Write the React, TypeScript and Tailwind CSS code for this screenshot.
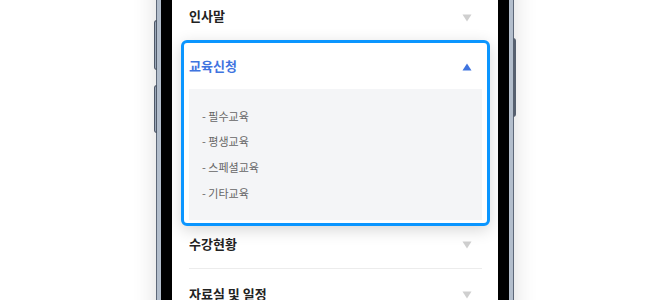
import React from 'react'

const Caret = ({ up = false, color }: { up?: boolean; color: string }) => (
  <svg width="10" height="8" viewBox="0 0 10 8" className="shrink-0">
    <path d={up ? 'M5 0.5L9.5 7.5H0.5Z' : 'M0.5 0.5H9.5L5 7.5Z'} fill={color} />
  </svg>
)

const Row = ({ label, divider = false, height = 'h-[50px]' }: { label: string; divider?: boolean; height?: string }) => (
  <div className={`flex ${height} items-center justify-between ${divider ? 'border-b border-[#ececec]' : ''}`}>
    <span className="text-[13px] font-bold text-[#222]">{label}</span>
    <span className="mr-[10px] mt-[3px]">
      <Caret color="#cfcfcf" />
    </span>
  </div>
)

const App = () => {
  const subMenu = ['필수교육', '평생교육', '스페셜교육', '기타교육']

  return (
    <div className="relative flex h-[300px] w-[670px] justify-center overflow-hidden bg-white font-['Noto_Sans_CJK_KR','Noto_Sans',sans-serif]">
      {/* Phone */}
      <div className="relative -mt-[80px] h-[460px] w-[358px] shrink-0 rounded-[52px] bg-[#5d6878] p-[1px] shadow-[0_0_24px_rgba(0,0,0,0.14)]">
        {/* side buttons */}
        <div className="absolute -left-[2px] top-[100px] h-[50px] w-[3px] rounded-l border border-[#4e5868] bg-[#9aa7b8]" />
        <div className="absolute -left-[2px] top-[165px] h-[48px] w-[3px] rounded-l border border-[#4e5868] bg-[#9aa7b8]" />
        <div className="absolute -right-[2px] top-[118px] h-[79px] w-[3px] rounded-r bg-[#56606f]" />

        <div className="h-full rounded-[51px] bg-[#b3becc] p-[4px]">
          <div className="h-full rounded-[47px] bg-black p-[11px]">
            <div className="h-full overflow-hidden rounded-[36px] bg-white pl-[17px] pr-[16px] pt-[56px]">
              <Row label="인사말" height="h-[48px]" />

              {/* expanded item */}
              <div className="relative z-10 -mx-[8px] rounded-[6px] border-[3px] border-[#0b96ff] bg-white px-[5px] pb-[3px] shadow-[0_4px_16px_rgba(0,0,0,0.16)]">
                <div className="flex h-[46px] items-center justify-between">
                  <span className="text-[13px] font-bold text-[#3f74df]">교육신청</span>
                  <span className="mr-[10px] mt-[2px]">
                    <Caret up color="#3f74df" />
                  </span>
                </div>
                <div className="flex flex-col bg-[#f4f5f7] pb-[14px] pl-[13px] pt-[14px]">
                  {subMenu.map((item) => (
                    <div key={item} className="flex h-[25.7px] items-center text-[11px] text-[#666]">
                      - {item}
                    </div>
                  ))}
                </div>
              </div>

              <div className="-mt-[1px]">
                <div className="flex h-[44px] items-center justify-between border-b border-[#ececec] pb-[6px]">
                  <span className="text-[13px] font-bold text-[#222]">수강현황</span>
                  <span className="mr-[10px] mt-[3px]">
                    <Caret color="#cfcfcf" />
                  </span>
                </div>
                <Row label="자료실 및 일정" divider />
              </div>
            </div>
          </div>
        </div>
      </div>
    </div>
  )
}

export default App
